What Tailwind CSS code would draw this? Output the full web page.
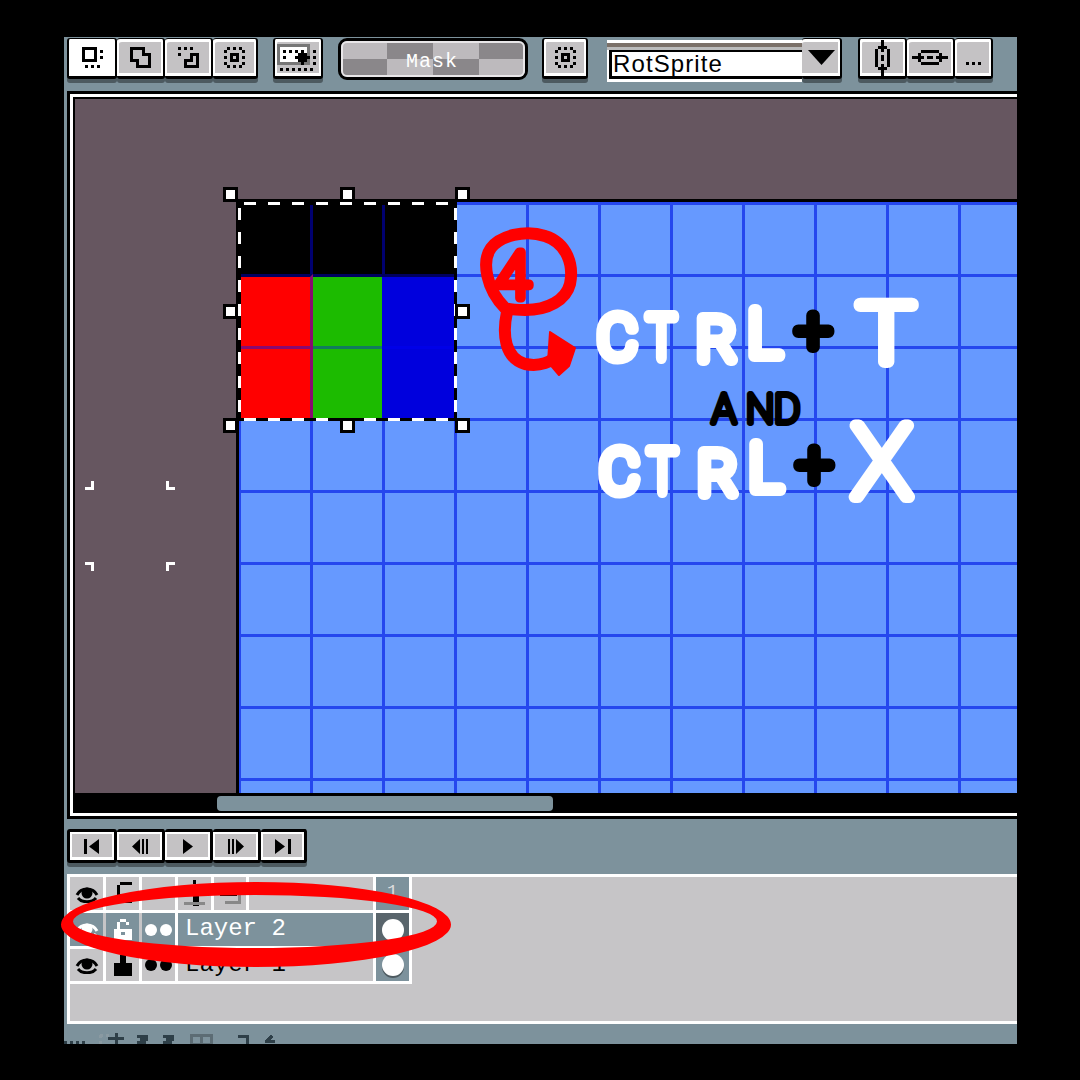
<!DOCTYPE html>
<html lang="en">
  <head>
    <meta charset="UTF-8" />
    <title>Aseprite RotSprite</title>
    <script src="https://cdn.jsdelivr.net/npm/@tailwindcss/browser@4"></script>
  </head>
  <body class="bg-black">
    <div class="relative w-[1080px] h-[1080px] overflow-hidden bg-black pl-[64px] pt-[37px]">
      <div class="w-[953px] h-[1007px] bg-[#7d929c] flex flex-col overflow-hidden">
        <!-- Toolbar -->
        <div class="h-[54px] shrink-0 flex items-start pl-[3px] pt-[1px]">
          <div class="flex">
            <div class="w-[50px] h-[41px] flex items-center justify-center border-[2px] border-t border-b-[3px] border-black rounded-[3px] bg-white shadow-[0_4px_0_#4d5a60]">
              <svg width="21" height="21" viewBox="0 0 7 7" shape-rendering="crispEdges"><path fill-rule="evenodd" d="M0 0h5v5h-5zM1 1v3h3v-3zM6 1h1v1h-1zM6 3h1v1h-1zM1 6h1v1h-1zM3 6h1v1h-1zM5 6h1v1h-1z" /></svg>
            </div>
            <div class="w-[48px] h-[41px] flex items-center justify-center border-[2px] border-t border-b-[3px] border-l-0 border-black rounded-[3px] bg-[#c4c2c4] shadow-[inset_2px_3px_0_#fff,inset_-2px_-3px_0_#fff,0_4px_0_#4d5a60]">
              <svg width="21" height="21" viewBox="0 0 7 7" shape-rendering="crispEdges"><path fill="none" stroke="#000" d="M.5 .5H4.5V2.5H6.5V6.5H2.5V4.5H.5Z" /></svg>
            </div>
            <div class="w-[48px] h-[41px] flex items-center justify-center border-[2px] border-t border-b-[3px] border-l-0 border-black rounded-[3px] bg-[#c4c2c4] shadow-[inset_2px_3px_0_#fff,inset_-2px_-3px_0_#fff,0_4px_0_#4d5a60]">
              <svg width="21" height="21" viewBox="0 0 7 7" shape-rendering="crispEdges"><path d="M0 0h1v1h-1zM2 0h1v1h-1zM4 0h1v1h-1zM0 2h1v1h-1z" /><path fill="none" stroke="#000" d="M2.5 6.5H6.5V2.5H4.5V4.5H2.5Z" /></svg>
            </div>
            <div class="w-[45px] h-[41px] flex items-center justify-center border-[2px] border-t border-b-[3px] border-l-0 border-black rounded-[3px] bg-[#c4c2c4] shadow-[inset_2px_3px_0_#fff,inset_-2px_-3px_0_#fff,0_4px_0_#4d5a60]">
              <svg width="21" height="21" viewBox="0 0 7 7" shape-rendering="crispEdges"><path d="M1 0h1v1h-1zM3 0h1v1h-1zM5 0h1v1h-1zM0 1h1v1h-1zM6 1h1v1h-1zM0 3h1v1h-1zM6 3h1v1h-1zM0 5h1v1h-1zM6 5h1v1h-1zM1 6h1v1h-1zM3 6h1v1h-1zM5 6h1v1h-1zM2 2h3v3h-3z" /><path fill="#c4c2c4" d="M3 3h1v1h-1z" /></svg>
            </div>
          </div>

          <div class="ml-[15px] w-[50px] h-[41px] flex items-center justify-center border-[2px] border-t border-b-[3px] border-black rounded-[3px] bg-[#c4c2c4] shadow-[inset_2px_3px_0_#fff,inset_-2px_-3px_0_#fff,0_4px_0_#4d5a60]">
            <svg width="42" height="27" viewBox="0 0 14 9" shape-rendering="crispEdges">
              <path fill="#777" d="M0 0h11v7h-11z" />
              <path fill="#fff" d="M1 1h9v5h-9z" />
              <path d="M2 2h1v1h-1zM4 2h1v1h-1zM6 2h1v1h-1zM2 4h1v1h-1zM8 2h1v1h-1zM12 2h1v1h-1zM12 4h1v1h-1zM12 6h1v1h-1zM1 8h1v1h-1zM3 8h1v1h-1zM5 8h1v1h-1zM7 8h1v1h-1zM9 8h1v1h-1zM11 8h1v1h-1z" />
              <path d="M8 2h1v1h1v1h1v1h-1v1h-1v1h-1v-1h-1v-1h-1v-1h1v-1h1z" />
            </svg>
          </div>

          <!-- Mask button -->
          <div class="relative ml-[15px] w-[190px] h-[42px] border-[3px] border-black rounded-[9px] overflow-hidden grid grid-cols-4 grid-rows-2">
            <div class="bg-[#bdbabd]"></div>
            <div class="bg-[#8a878a]"></div>
            <div class="bg-[#bdbabd]"></div>
            <div class="bg-[#8a878a]"></div>
            <div class="bg-[#8a878a]"></div>
            <div class="bg-[#bdbabd]"></div>
            <div class="bg-[#8a878a]"></div>
            <div class="bg-[#bdbabd]"></div>
            <div class="absolute inset-0 rounded-[6px] border-[2px] border-[#e8e6e8]"></div>
            <span class="absolute left-[65px] top-[9px] font-['Liberation_Mono',monospace] text-[20px] leading-[24px] tracking-[1px] text-white">Mask</span>
          </div>

          <div class="ml-[14px] w-[46px] h-[41px] flex items-center justify-center border-[2px] border-t border-b-[3px] border-black rounded-[3px] bg-[#c4c2c4] shadow-[inset_2px_3px_0_#fff,inset_-2px_-3px_0_#fff,0_4px_0_#4d5a60]">
            <svg width="21" height="21" viewBox="0 0 7 7" shape-rendering="crispEdges"><path d="M1 0h1v1h-1zM3 0h1v1h-1zM5 0h1v1h-1zM0 1h1v1h-1zM6 1h1v1h-1zM0 3h1v1h-1zM6 3h1v1h-1zM0 5h1v1h-1zM6 5h1v1h-1zM1 6h1v1h-1zM3 6h1v1h-1zM5 6h1v1h-1zM2 2h3v3h-3z" /><path fill="#c4c2c4" d="M3 3h1v1h-1z" /></svg>
          </div>

          <!-- Resize method combo -->
          <div class="ml-[19px] flex">
            <div class="mt-[2px] w-[195px] h-[42px] bg-white pt-[3px] flex flex-col">
              <div class="h-[4px] shrink-0 bg-[#7b7068]"></div>
              <div class="h-[3px] shrink-0 bg-[#bbbbbb]"></div>
              <div class="ml-[2px] h-[29px] shrink-0 border-[3px] border-r-0 border-black border-t-[2px] bg-white pl-[1px] font-['Liberation_Sans',sans-serif] text-[24px] leading-[23px] tracking-[1.1px] text-black">RotSprite</div>
            </div>
            <div class="w-[40px] h-[41px] flex items-center justify-center border-[2px] border-t border-b-[3px] border-l-0 border-black rounded-[3px] bg-[#c4c2c4] shadow-[inset_0_3px_0_#fff,inset_-2px_-3px_0_#fff,0_4px_0_#4d5a60]">
              <svg width="27" height="15" viewBox="0 0 27 15"><path d="M0 0h27L13.5 15z" /></svg>
            </div>
          </div>

          <div class="ml-[16px] flex">
            <div class="w-[49px] h-[41px] flex items-center justify-center border-[2px] border-t border-b-[3px] border-black rounded-[3px] bg-[#c4c2c4] shadow-[inset_2px_3px_0_#fff,inset_-2px_-3px_0_#fff,0_4px_0_#4d5a60]">
              <svg width="21" height="36" viewBox="0 0 7 12" shape-rendering="crispEdges"><path d="M3 0h1v2h-1zM3 3h1v1h-1zM3 5h1v2h-1zM3 8h1v1h-1zM3 10h1v2h-1zM2 2h3v1h-3zM2 9h3v1h-3zM1 3h1v6h-1zM5 3h1v6h-1z" /></svg>
            </div>
            <div class="w-[48px] h-[41px] flex items-center justify-center border-[2px] border-t border-b-[3px] border-l-0 border-black rounded-[3px] bg-[#c4c2c4] shadow-[inset_2px_3px_0_#fff,inset_-2px_-3px_0_#fff,0_4px_0_#4d5a60]">
              <svg width="36" height="21" viewBox="0 0 12 7" shape-rendering="crispEdges"><path d="M0 3h2v1h-2zM3 3h1v1h-1zM5 3h2v1h-2zM8 3h1v1h-1zM10 3h2v1h-2zM2 2h1v3h-1zM9 2h1v3h-1zM3 1h6v1h-6zM3 5h6v1h-6z" /></svg>
            </div>
            <div class="w-[38px] h-[41px] flex items-end justify-center pb-[11px] border-[2px] border-t border-b-[3px] border-l-0 border-black rounded-[3px] bg-[#c4c2c4] shadow-[inset_2px_3px_0_#fff,inset_-2px_-3px_0_#fff,0_4px_0_#4d5a60]">
              <svg width="15" height="3" viewBox="0 0 15 3" shape-rendering="crispEdges"><path d="M0 0h3v3h-3zM6 0h3v3h-3zM12 0h3v3h-3z" /></svg>
            </div>
          </div>
        </div>

        <!-- Editor frame -->
        <div class="ml-[3px] h-[728px] shrink-0 border-[3px] border-r-0 border-black">
          <div class="h-full border-[3px] border-r-0 border-white bg-black pl-[2px] pt-[2px] flex flex-col">
            <div class="relative h-[694px] shrink-0 flex flex-col bg-[#665660] overflow-hidden">
              <div class="h-[100px] shrink-0"></div>
              <div class="flex-1 flex">
                <div class="w-[164px] shrink-0 border-r-[3px] border-black"></div>
                <div class="flex-1 border-t-[3px] border-black bg-[#6699ff] bg-[linear-gradient(to_right,#2547ee_3px,transparent_3px),linear-gradient(to_bottom,#2547ee_3px,transparent_3px)] bg-[size:72px_72px] bg-[position:71px_72px] bg-origin-padding"></div>
              </div>

              <!-- Selected cells -->
              <div class="absolute left-[166px] top-[103px] w-[214px] h-[216px] grid grid-cols-[72px_69px_73px] grid-rows-[72px_75px_69px]">
                <div class="bg-black border-r-[3px] border-[#000070]"></div>
                <div class="bg-black"></div>
                <div class="bg-black border-l-[3px] border-[#000070]"></div>
                <div class="bg-[#ff0000] border-r-[3px] border-b-[3px] border-[#8a0a70] border-t-[3px] border-t-[#000060]"></div>
                <div class="bg-[#1cbb00] border-b-[3px] border-[#127a5c] border-t-[3px] border-t-[#000060]"></div>
                <div class="bg-[#0000dd] border-t-[3px] border-t-[#000060] border-b-[3px] border-b-[#0000e8]"></div>
                <div class="bg-[#ff0000] border-r-[3px] border-[#8a0a70]"></div>
                <div class="bg-[#1cbb00]"></div>
                <div class="bg-[#0000dd]"></div>
              </div>

              <!-- Marching ants -->
              <div class="absolute left-[163px] top-[103px] w-[219px] h-[3px] bg-[repeating-linear-gradient(90deg,#000_0_6px,#fff_6px_18px,#000_18px_24px)]"></div>
              <div class="absolute left-[163px] top-[319px] w-[219px] h-[3px] bg-[repeating-linear-gradient(90deg,#000_0_6px,#fff_6px_18px,#000_18px_24px)]"></div>
              <div class="absolute left-[163px] top-[103px] w-[3px] h-[219px] bg-[repeating-linear-gradient(180deg,#000_0_6px,#fff_6px_18px,#000_18px_24px)]"></div>
              <div class="absolute left-[379px] top-[103px] w-[3px] h-[219px] bg-[repeating-linear-gradient(180deg,#000_0_6px,#fff_6px_18px,#000_18px_24px)]"></div>

              <!-- Transform handles -->
              <div class="absolute left-[148px] top-[88px] w-[15px] h-[15px] bg-white border-[3px] border-black"></div>
              <div class="absolute left-[265px] top-[88px] w-[15px] h-[15px] bg-white border-[3px] border-black"></div>
              <div class="absolute left-[380px] top-[88px] w-[15px] h-[15px] bg-white border-[3px] border-black"></div>
              <div class="absolute left-[148px] top-[205px] w-[15px] h-[15px] bg-white border-[3px] border-black"></div>
              <div class="absolute left-[380px] top-[205px] w-[15px] h-[15px] bg-white border-[3px] border-black"></div>
              <div class="absolute left-[148px] top-[319px] w-[15px] h-[15px] bg-white border-[3px] border-black"></div>
              <div class="absolute left-[265px] top-[319px] w-[15px] h-[15px] bg-white border-[3px] border-black"></div>
              <div class="absolute left-[380px] top-[319px] w-[15px] h-[15px] bg-white border-[3px] border-black"></div>

              <!-- Symmetry corner marks -->
              <div class="absolute left-[10px] top-[382px] w-[9px] h-[9px] border-r-[3px] border-b-[3px] border-white"></div>
              <div class="absolute left-[91px] top-[382px] w-[9px] h-[9px] border-l-[3px] border-b-[3px] border-white"></div>
              <div class="absolute left-[10px] top-[463px] w-[9px] h-[9px] border-r-[3px] border-t-[3px] border-white"></div>
              <div class="absolute left-[91px] top-[463px] w-[9px] h-[9px] border-l-[3px] border-t-[3px] border-white"></div>
            </div>
            <!-- Scrollbar -->
            <div class="flex-1 pl-[142px] pt-[3px]">
              <div class="w-[336px] h-[15px] rounded-[4px] bg-[#7d929c]"></div>
            </div>
          </div>
        </div>

        <!-- Playback buttons -->
        <div class="h-[55px] shrink-0 pl-[3px] pt-[10px] flex items-start">
          <div class="w-[50px] h-[34px] flex items-center justify-center border-[3px] border-black rounded-[3px] bg-[#c4c2c4] shadow-[inset_2px_2px_0_#fff,inset_-2px_-3px_0_#fff,0_4px_0_#4d5a60]">
            <svg width="16" height="15" viewBox="0 0 16 15"><path d="M0 0h3v15h-3zM5 7.5L15 0v15z" /></svg>
          </div>
          <div class="w-[48px] h-[34px] flex items-center justify-center border-[3px] border-l-0 border-black rounded-[3px] bg-[#c4c2c4] shadow-[inset_2px_2px_0_#fff,inset_-2px_-3px_0_#fff,0_4px_0_#4d5a60]">
            <svg width="16" height="15" viewBox="0 0 16 15"><path d="M0 7.5L8 0v15zM10 0h2v15h-2zM14 0h2v15h-2z" /></svg>
          </div>
          <div class="w-[48px] h-[34px] flex items-center justify-center border-[3px] border-l-0 border-black rounded-[3px] bg-[#c4c2c4] shadow-[inset_2px_2px_0_#fff,inset_-2px_-3px_0_#fff,0_4px_0_#4d5a60]">
            <svg width="10" height="15" viewBox="0 0 10 15"><path d="M0 0l10 7.5L0 15z" /></svg>
          </div>
          <div class="w-[48px] h-[34px] flex items-center justify-center border-[3px] border-l-0 border-black rounded-[3px] bg-[#c4c2c4] shadow-[inset_2px_2px_0_#fff,inset_-2px_-3px_0_#fff,0_4px_0_#4d5a60]">
            <svg width="16" height="15" viewBox="0 0 16 15"><path d="M0 0h2v15h-2zM4 0h2v15h-2zM8 0l8 7.5L8 15z" /></svg>
          </div>
          <div class="w-[46px] h-[34px] flex items-center justify-center border-[3px] border-l-0 border-black rounded-[3px] bg-[#c4c2c4] shadow-[inset_2px_2px_0_#fff,inset_-2px_-3px_0_#fff,0_4px_0_#4d5a60]">
            <svg width="16" height="15" viewBox="0 0 16 15"><path d="M0 0l10 7.5L0 15zM13 0h3v15h-3z" /></svg>
          </div>
        </div>

        <!-- Layers -->
        <div class="ml-[3px] h-[150px] shrink-0 bg-[#c6c5c7] border-t-[3px] border-b-[3px] border-l-[3px] border-white flex flex-col">
          <!-- Layer header -->
          <div class="flex w-[342px] h-[36px] shrink-0 border-b-[3px] border-white">
            <div class="w-[36px] border-r-[3px] border-white flex items-center justify-center">
              <svg width="24" height="18" viewBox="0 0 24 18" fill="none" stroke="#000" stroke-width="3"><path d="M2 10C6 2 18 2 22 10" /><path d="M3 13C7 18 17 18 21 13" /><circle cx="12" cy="8" r="4" fill="#000" /></svg>
            </div>
            <div class="w-[36px] border-r-[3px] border-white flex items-center justify-center">
              <svg width="18" height="24" viewBox="0 0 18 24" shape-rendering="crispEdges"><path d="M3 12h15v9h-15zM6 0h12v3h-12zM3 3h3v9h-3z" /></svg>
            </div>
            <div class="w-[36px] border-r-[3px] border-white flex items-center justify-center">
              <svg width="24" height="6" viewBox="0 0 24 6" fill="#333"><path d="M0 0h9v6h-9zM14 0h9v6h-9z" /></svg>
            </div>
            <div class="w-[36px] border-r-[3px] border-white flex items-center justify-center">
              <svg width="21" height="27" viewBox="0 0 21 27" shape-rendering="crispEdges"><path d="M9 0h3v4h-3zM0 9h21v3h-21zM9 12h6v14h-6z" /><path fill="#888" d="M0 22h21v3h-21z" /></svg>
            </div>
            <div class="w-[35px] border-r-[3px] border-white flex items-center justify-center">
              <svg width="21" height="21" viewBox="0 0 21 21" fill="none" stroke-width="3" shape-rendering="crispEdges"><path stroke="#888" d="M19 8v11h-14" /><path stroke="#000" d="M1 2v9h14v-9" /></svg>
            </div>
            <div class="w-[127px] border-r-[3px] border-white"></div>
            <div class="w-[36px] border-r-[3px] border-white bg-[#7d929c] flex justify-center pt-[5px] font-['Liberation_Mono',monospace] text-[18px] leading-[20px] text-[#dcdcdc]">1</div>
          </div>
          <!-- Layer 2 -->
          <div class="flex w-[342px] h-[36px] shrink-0 border-b-[3px] border-white bg-[#7d929c]">
            <div class="w-[36px] border-r-[3px] border-[#c6c5c7] flex items-center justify-center">
              <svg width="24" height="18" viewBox="0 0 24 18" fill="none" stroke="#fff" stroke-width="3"><path d="M2 10C6 2 18 2 22 10" /><path d="M3 13C7 18 17 18 21 13" /><circle cx="12" cy="8" r="4" fill="#fff" /></svg>
            </div>
            <div class="w-[36px] border-r-[3px] border-[#c6c5c7] flex items-center justify-center">
              <svg width="18" height="21" viewBox="0 0 18 21" shape-rendering="crispEdges"><path fill="#fff" fill-rule="evenodd" d="M0 10h18v11h-18zM7 13v3h4v-3zM3 3h3v7h-3zM6 0h6v3h-6zM12 3h3v3h-3z" /></svg>
            </div>
            <div class="w-[36px] border-r-[3px] border-white flex items-center justify-center">
              <svg width="27" height="12" viewBox="0 0 27 12" fill="#fff"><circle cx="6" cy="6" r="6" /><circle cx="21" cy="6" r="6" /></svg>
            </div>
            <div class="w-[198px] pl-[7px] border-r-[3px] border-white font-['Liberation_Mono',monospace] text-[24px] leading-[32px] text-white">Layer 2</div>
            <div class="w-[36px] border-r-[3px] border-white bg-[#59656c] flex items-center justify-center">
              <div class="w-[22px] h-[22px] rounded-full bg-white"></div>
            </div>
          </div>
          <!-- Layer 1 -->
          <div class="flex w-[342px] h-[35px] shrink-0 border-b-[3px] border-white">
            <div class="w-[36px] border-r-[3px] border-white flex items-center justify-center">
              <svg width="24" height="18" viewBox="0 0 24 18" fill="none" stroke="#000" stroke-width="3"><path d="M2 10C6 2 18 2 22 10" /><path d="M3 13C7 18 17 18 21 13" /><circle cx="12" cy="8" r="4" fill="#000" /></svg>
            </div>
            <div class="w-[36px] border-r-[3px] border-white flex items-center justify-center">
              <svg width="18" height="21" viewBox="0 0 18 21" shape-rendering="crispEdges"><path d="M0 8h18v13h-18zM6 0h6v8h-6z" /></svg>
            </div>
            <div class="w-[36px] border-r-[3px] border-white flex items-center justify-center">
              <svg width="27" height="12" viewBox="0 0 27 12" fill="#000"><circle cx="6" cy="6" r="6" /><circle cx="21" cy="6" r="6" /></svg>
            </div>
            <div class="w-[198px] pl-[7px] border-r-[3px] border-white font-['Liberation_Mono',monospace] text-[24px] leading-[32px] text-black">Layer 1</div>
            <div class="w-[36px] border-r-[3px] border-white bg-[#7d929c] flex items-center justify-center">
              <div class="w-[22px] h-[22px] rounded-full bg-white shadow-[0_2px_0_#4d5a60]"></div>
            </div>
          </div>
        </div>

        <!-- Status bar, cut off by the crop -->
        <div class="flex-1 overflow-hidden pt-[9px]">
          <svg width="300" height="11" viewBox="0 0 300 11" fill="none" stroke="#2e3f48" stroke-width="3" shape-rendering="crispEdges">
            <path stroke-dasharray="3 3" d="M0 9h21" />
            <path stroke="#8a9aa2" stroke-dasharray="3 3" d="M36 2h12M36 2v9" />
            <path d="M52 0v11M44 5h16" />
            <path d="M73 3h9v3h-6M73 9h9" />
            <path d="M99 3h9v3h-6M99 9h9" />
            <path stroke="#5c6c74" d="M127 2h20v9h-20zM137 2v9" />
            <path d="M174 3h9v8" />
            <path d="M202 9l6-6M201 8h10" />
          </svg>
        </div>
      </div>

      <!-- Hand-drawn annotations on top of the screenshot -->
      <svg class="absolute left-0 top-0" width="1080" height="1080" viewBox="0 0 1080 1080">
        <g font-family="Roboto, sans-serif" font-weight="100" stroke-linejoin="round" stroke-linecap="round">
          <g fill="#fff" stroke="#fff" stroke-width="12" font-size="60">
            <text x="598" y="358">C</text>
            <text x="0" y="358" transform="translate(647 0) scale(.8 1)">T</text>
            <text x="697" y="360">R</text>
            <text x="748" y="356" font-size="64">L</text>
            <text x="600" y="492">C</text>
            <text x="0" y="492" transform="translate(648 0) scale(.8 1)">T</text>
            <text x="698" y="494">R</text>
            <text x="749" y="490" font-size="64">L</text>
            <text x="0" y="362" font-size="82" transform="translate(858 0) scale(1.15 1)">T</text>
            <text x="852" y="497" font-size="100">X</text>
          </g>
          <g fill="#000" stroke="#000">
            <text x="796" y="351" font-size="62" stroke-width="12">+</text>
            <text x="797" y="485" font-size="62" stroke-width="12">+</text>
            <text x="712 746 774" y="423" font-size="40" stroke-width="6">AND</text>
          </g>
          <text x="495" y="298" fill="#ff0000" stroke="#ff0000" stroke-width="9" font-size="64">4</text>
        </g>
        <path d="M505 308C487 290 481 262 491 248C500 236 525 229 545 236C567 243 574 265 570 284C566 300 548 310 525 310C514 310 508 309 505 308" fill="none" stroke="#ff0000" stroke-width="12" />
        <path d="M507 312C502 335 505 358 525 364C540 367 552 362 558 354" fill="none" stroke="#ff0000" stroke-width="12" stroke-linecap="round" />
        <path d="M550 332L575 348L569 366L559 375L548 362z" fill="#ff0000" stroke="#ff0000" stroke-width="2" stroke-linejoin="round" />
        <path fill="#ff0000" fill-rule="evenodd" d="M61 924.5a195 42.5 0 1 0 390 0a195 42.5 0 1 0 -390 0zM73 921.5a182 26.5 0 1 1 364 0a182 26.5 0 1 1 -364 0z" />
      </svg>
    </div>
  </body>
</html>
